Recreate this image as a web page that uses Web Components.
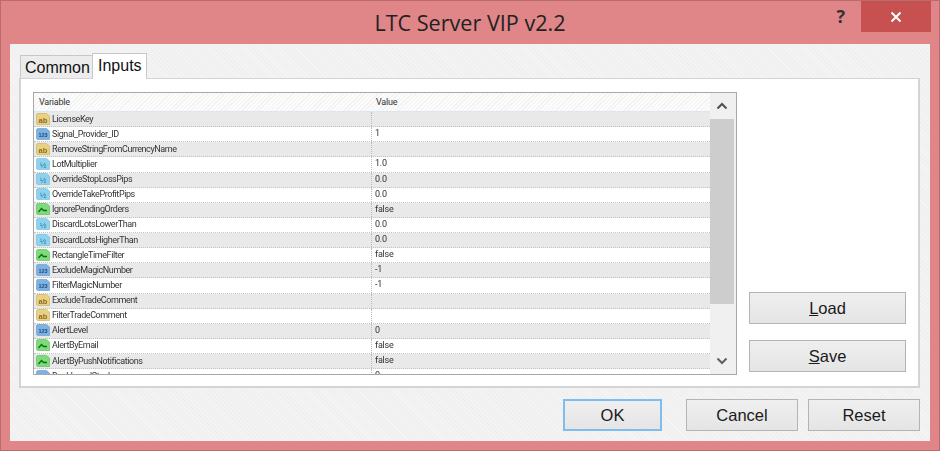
<!DOCTYPE html>
<html>
<head>
<meta charset="utf-8">
<title>LTC Server VIP v2.2</title>
<style>
  html, body { margin: 0; padding: 0; background: #e08689; }
  body { width: 940px; height: 451px; overflow: hidden; font-family: "Liberation Sans", Arial, sans-serif; }
</style>
</head>
<body>
<input-dialog caption="LTC Server VIP v2.2">
  <dialog-tabs>
    <inputs-grid></inputs-grid>
    <div slot="side">
      <dialog-button side><u>L</u>oad</dialog-button>
      <dialog-button side><u>S</u>ave</dialog-button>
    </div>
  </dialog-tabs>
  <dialog-button slot="actions" default style="width:99px">OK</dialog-button>
  <dialog-button slot="actions" style="width:112px;margin-left:24px">Cancel</dialog-button>
  <dialog-button slot="actions" style="width:112px;margin-left:10px">Reset</dialog-button>
</input-dialog>

<script>
const ROWS = [
  ['ab', 'LicenseKey', ''],
  ['123', 'Signal_Provider_ID', '1'],
  ['ab', 'RemoveStringFromCurrencyName', ''],
  ['half', 'LotMultiplier', '1.0'],
  ['half', 'OverrideStopLossPips', '0.0'],
  ['half', 'OverrideTakeProfitPips', '0.0'],
  ['bool', 'IgnorePendingOrders', 'false'],
  ['half', 'DiscardLotsLowerThan', '0.0'],
  ['half', 'DiscardLotsHigherThan', '0.0'],
  ['bool', 'RectangleTimeFilter', 'false'],
  ['123', 'ExcludeMagicNumber', '-1'],
  ['123', 'FilterMagicNumber', '-1'],
  ['ab', 'ExcludeTradeComment', ''],
  ['ab', 'FilterTradeComment', ''],
  ['123', 'AlertLevel', '0'],
  ['bool', 'AlertByEmail', 'false'],
  ['bool', 'AlertByPushNotifications', 'false'],
  ['123', 'DashboardStack', '0']
];

class InputDialog extends HTMLElement {
  connectedCallback() {
    this.attachShadow({ mode: 'open' });
    this.shadowRoot.innerHTML = `
      <style>
        :host { display: flex; flex-direction: column; width: 940px; height: 451px; box-sizing: border-box;
          border: 1px solid #b96b6e; background: #e08689; }
        .title { height: 43px; flex: none; display: flex; position: relative; align-items: center; justify-content: center; }
        .caption { font: 21.6px "Open Sans", sans-serif; color: #222; }
        .help { position: absolute; right: 94px; top: 3px; font: bold 18px "Open Sans", sans-serif; color: #333; }
        .close { position: absolute; right: 8px; top: 0; width: 70px; height: 31px; background: #c75050;
          display: flex; align-items: center; justify-content: center; }
        .body { flex: 1; margin: 0 9px 9px; background: #f0f0f0; display: flex; flex-direction: column;
          background-image: repeating-linear-gradient(45deg, rgba(255,255,255,.35) 0 1px, transparent 1px 3px); }
        .actions { display: flex; padding: 11px 10px 10px 0; justify-content: flex-end; }
      </style>
      <div class="title">
        <span class="caption">${this.getAttribute('caption')}</span>
        <span class="help">?</span>
        <span class="close">
          <svg width="12" height="12" viewBox="0 0 12 12"><path d="M1.5 1.5l9 9M10.5 1.5l-9 9" stroke="#fff" stroke-width="2"/></svg>
        </span>
      </div>
      <div class="body">
        <slot></slot>
        <div class="actions"><slot name="actions"></slot></div>
      </div>`;
  }
}

class DialogTabs extends HTMLElement {
  connectedCallback() {
    this.attachShadow({ mode: 'open' });
    this.shadowRoot.innerHTML = `
      <style>
        :host { display: block; padding: 9px 10px 0 9px; font: 16px "Liberation Sans", sans-serif; color: #111; }
        .strip { display: flex; align-items: flex-end; height: 25px; padding-left: 1px; position: relative; z-index: 1; }
        .tab { box-sizing: border-box; border: 1px solid #c8c8c8; border-bottom: 0; }
        .off { width: 72px; height: 23px; background: #ececec; padding: 3px 0 0 4px; border-right: 0; }
        .on { width: 55px; height: 26px; margin-bottom: -1px; background: #fff; padding: 3px 0 0 5px; }
        .page { box-sizing: border-box; height: 310px; background: #fff; border: 2px solid #d4d4d4; border-width: 1px 2px 2px 2px;
          padding: 13px 12px 11px 12px; display: flex; }
        .side { margin-left: 12px; width: 157px; display: flex; flex-direction: column; justify-content: flex-end; }
        ::slotted([slot=side]) { display: flex; flex-direction: column; gap: 16px; padding-bottom: 3px; }
      </style>
      <div class="strip"><div class="tab off">Common</div><div class="tab on">Inputs</div></div>
      <div class="page">
        <slot></slot>
        <div class="side"><slot name="side"></slot></div>
      </div>`;
  }
}

class InputsGrid extends HTMLElement {
  connectedCallback() {
    this.attachShadow({ mode: 'open' });
    const rows = ROWS.map(([type, name, value]) => `
      <div class="row">
        <div class="name"><type-icon kind="${type}"></type-icon><span>${name}</span></div>
        <div class="val">${value}</div>
      </div>`).join('');
    this.shadowRoot.innerHTML = `
      <style>
        :host { display: flex; box-sizing: border-box; width: 704px; height: 283px; border: 1px solid #a8a8a8; background: #fff;
          font: 9px Roboto, sans-serif; letter-spacing: -.22px; color: #333; }
        .list { flex: 1; min-width: 0; overflow: hidden; filter: blur(.3px); }
        .head { display: flex; height: 18px; align-items: center; border-bottom: 1px solid #dce6f0;
          background: repeating-linear-gradient(135deg, #f2f2f2 0 1px, #fcfcfc 1px 3px); }
        .head div:first-child { width: 333px; padding-left: 5px; }
        .head div:last-child { padding-left: 4px; }
        .row { display: flex; height: 15.125px; box-sizing: border-box; border-bottom: 1px dotted #c4c4c4; }
        .row:nth-child(odd) { background: #e9e9e9; }
        .name { width: 338px; box-sizing: border-box; display: flex; align-items: center; border-right: 1px dotted #bbb; flex: none; padding-left: 2px; }
        .name span { margin: -1px 0 0 2px; letter-spacing: -.42px; }
        .val { padding-left: 3px; line-height: 13px; }
        .bar { width: 26px; flex: none; background: #f0f0f0; display: flex; flex-direction: column; align-items: flex-start; }
        .btn { height: 26px; flex: none; width: 24px; display: flex; align-items: center; justify-content: center; }
        .thumb { width: 24px; height: 185px; background: #cdcdcd; flex: none; }
        .rest { flex: 1; }
      </style>
      <div class="list">
        <div class="head"><div>Variable</div><div>Value</div></div>
        <div>${rows}</div>
      </div>
      <div class="bar">
        <div class="btn"><svg width="12" height="8" viewBox="0 0 12 8"><path d="M1.5 6.5L6 2l4.5 4.5" fill="none" stroke="#505050" stroke-width="2"/></svg></div>
        <div class="thumb"></div>
        <div class="rest"></div>
        <div class="btn"><svg width="12" height="8" viewBox="0 0 12 8"><path d="M1.5 1.5L6 6l4.5-4.5" fill="none" stroke="#606060" stroke-width="2"/></svg></div>
      </div>`;
  }
}

class TypeIcon extends HTMLElement {
  connectedCallback() {
    this.attachShadow({ mode: 'open' });
    const kind = this.getAttribute('kind');
    const fills = { ab: ['#e9d184', '#c9ab55'], '123': ['#7fb2e2', '#5f97cc'], half: ['#8fd2ee', '#6dbbdc'], bool: ['#7cdc7c', '#58b858'] };
    const [fill, edge] = fills[kind];
    let mark = '';
    if (kind === 'ab') mark = '<text x="7" y="9.5" font-size="7.5" font-weight="bold" fill="#8a6c20" text-anchor="middle">ab</text>';
    if (kind === '123') mark = '<text x="7" y="9" font-size="5.5" font-weight="bold" fill="#1c4a80" text-anchor="middle">123</text>';
    if (kind === 'half') mark = '<text x="7" y="9.5" font-size="8" fill="#2c7aa6" text-anchor="middle">½</text>';
    if (kind === 'bool') mark = '<path d="M2.5 9l3-3.5 2 2H11" fill="none" stroke="#146a14" stroke-width="1.3"/>';
    this.shadowRoot.innerHTML = `
      <style>:host { display: block; width: 14px; height: 13px; flex: none; }
        svg { display: block; font-family: "Liberation Sans", sans-serif; letter-spacing: 0; }</style>
      <svg width="14" height="13" viewBox="0 0 14 13">
        <path d="M2 .5h8.5L13.5 3v8.5H2A1.5 1.5 0 0 1 .5 10V2A1.5 1.5 0 0 1 2 .5z" fill="${fill}" stroke="${edge}" stroke-opacity=".6"/>
        ${mark}
      </svg>`;
  }
}

class DialogButton extends HTMLElement {
  connectedCallback() {
    this.attachShadow({ mode: 'open' });
    this.shadowRoot.innerHTML = `
      <style>
        :host { display: flex; box-sizing: border-box; height: 32px; align-items: center; justify-content: center;
          font: 16.5px "Liberation Sans", sans-serif; color: #1a1a1a; background: linear-gradient(#efefef, #e5e5e5);
          border: 1px solid #b4b4b4; }
        :host([default]) { border: 2px solid #7fbcf0; }
      </style>
      <slot></slot>`;
  }
}

customElements.define('input-dialog', InputDialog);
customElements.define('dialog-tabs', DialogTabs);
customElements.define('inputs-grid', InputsGrid);
customElements.define('type-icon', TypeIcon);
customElements.define('dialog-button', DialogButton);
</script>
</body>
</html>
